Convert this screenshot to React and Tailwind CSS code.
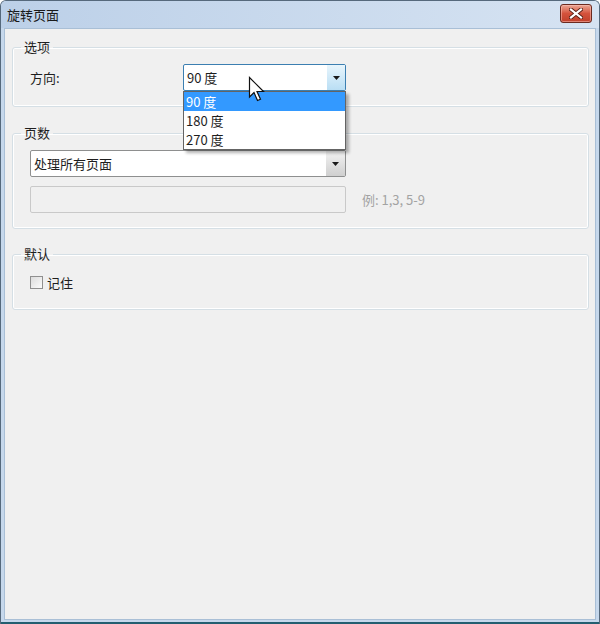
import { useState } from "react";

const options = ["90 度", "180 度", "270 度"];

function Arrow() {
  return (
    <svg width="7" height="4" viewBox="0 0 7 4">
      <path d="M0 0 H7 L3.5 4 Z" fill="#1a1a1a" />
    </svg>
  );
}

function Cursor() {
  return (
    <svg width="18" height="27" viewBox="0 0 18 27" className="absolute left-[247px] top-[75px] z-20">
      <path
        d="M1.5 1.5 L1.5 21 L6 16.5 L9.5 24.5 L12.5 23.3 L9 15.5 L15.5 15.5 Z"
        fill="#ffffff"
        stroke="#111111"
        strokeWidth="1.2"
        strokeLinejoin="miter"
      />
    </svg>
  );
}

function CloseButton() {
  return (
    <div className="flex h-[19px] w-[32px] items-center justify-center rounded-[3px] border border-[#6b2a1f] bg-gradient-to-b from-[#eaa594] via-[#d4523c] to-[#c0402b] shadow-[inset_0_0_0_1px_rgba(255,200,190,0.5)]">
      <svg width="14" height="11" viewBox="0 0 14 11">
        <path d="M2 1.5 L12 9.5 M12 1.5 L2 9.5" stroke="#5a2016" strokeWidth="4" strokeLinecap="square" />
        <path d="M2 1.5 L12 9.5 M12 1.5 L2 9.5" stroke="#ffffff" strokeWidth="2.2" strokeLinecap="square" />
      </svg>
    </div>
  );
}

function Group({ title, className = "", children }) {
  return (
    <fieldset
      className={`rounded-[3px] border border-[#d5dfe5] pb-[15px] pl-[17px] pt-[9px] shadow-[inset_0_0_0_1px_#ffffff] ${className}`}
    >
      <legend className="ml-[-9px] px-[3px] text-[13px] leading-[16px] text-[#1e1e1e]">
        {title}
      </legend>
      {children}
    </fieldset>
  );
}

export default function App() {
  const [remember, setRemember] = useState(false);

  return (
    <div
      className="relative flex h-[624px] w-[600px] flex-col overflow-hidden rounded-t-[6px] border-x border-t border-[#56697c] bg-[#c6d8ec]"
      style={{ fontFamily: '"Noto Sans CJK SC", "Noto Sans", sans-serif' }}
    >
      {/* title bar */}
      <div className="flex h-[27px] shrink-0 items-center justify-between bg-gradient-to-r from-[#bcd0e8] to-[#d6e3f2] pl-[6px] pr-[7px]">
        <span className="text-[13px] text-[#1a1a1a]">旋转页面</span>
        <div className="mt-[-2px]">
          <CloseButton />
        </div>
      </div>

      {/* body */}
      <div className="flex flex-1 flex-col border-b-[2px] border-[#235e70] px-[3px] pb-[2px]">
        <div className="flex flex-1 flex-col border border-[#a9bfd6] bg-[#f0f0f0] pl-[7px] pr-[6px] pt-[10px] text-[13px] text-[#1e1e1e]">
          <Group title="选项">
            <div className="flex items-center">
              <span className="w-[153px]">方向:</span>
              <div className="relative">
                <div className="flex h-[27px] w-[163px] items-center rounded-[2px] border border-[#3c7fb1] bg-white">
                  <span className="flex-1 pl-[3px]">90 度</span>
                  <div className="flex h-full w-[18px] items-center justify-center bg-gradient-to-b from-[#e8f5fc] to-[#b9def4]">
                    <Arrow />
                  </div>
                </div>
                <div className="absolute left-0 top-full z-10 w-[163px] border border-[#646464] bg-white shadow-[3px_3px_3px_rgba(0,0,0,0.3)]">
                  {options.map((opt, i) => (
                    <div
                      key={opt}
                      className={`flex h-[19px] items-center pl-[2px] ${
                        i === 0 ? "bg-[#3399ff] text-white" : "text-[#1e1e1e]"
                      }`}
                    >
                      {opt}
                    </div>
                  ))}
                </div>
              </div>
            </div>
          </Group>

          <Group title="页数" className="mt-[18px]">
            <div className="flex h-[27px] w-[316px] items-center rounded-[2px] border border-[#8e8f8f] bg-white">
              <span className="flex-1 pl-[3px]">处理所有页面</span>
              <div className="flex h-full w-[19px] items-center justify-center bg-gradient-to-b from-[#f3f3f3] to-[#cfcfcf]">
                <Arrow />
              </div>
            </div>
            <div className="mt-[9px] flex items-center">
              <div className="h-[27px] w-[316px] rounded-[2px] border border-[#c9c9c9] bg-[#f0f0f0]" />
              <span className="ml-[16px] text-[#a3a3a3]">例: 1,3, 5-9</span>
            </div>
          </Group>

          <Group title="默认" className="mt-[17px] !pb-[18px] !pt-[12px]">
            <label className="flex h-[17px] items-center">
              <span
                onClick={() => setRemember(!remember)}
                className="flex h-[13px] w-[13px] items-center justify-center border border-[#8f8f8f] bg-gradient-to-br from-[#dcdcdc] to-[#fbfbfb]"
              >
                {remember && <span className="text-[10px] leading-none">✓</span>}
              </span>
              <span className="ml-[4px]">记住</span>
            </label>
          </Group>
        </div>
      </div>

      <Cursor />
    </div>
  );
}
